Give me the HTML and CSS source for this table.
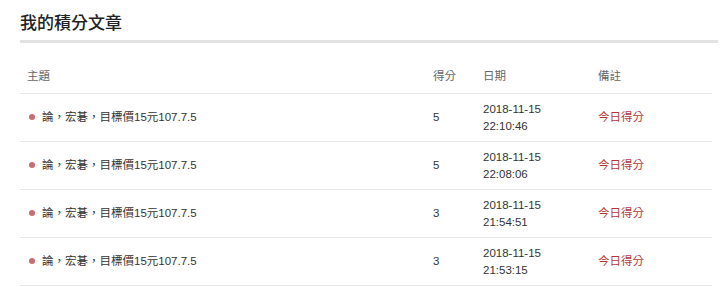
FILE: index.html
```html
<!DOCTYPE html>
<html lang="zh-Hant">
<head>
<meta charset="utf-8">
<link rel="stylesheet" href="styles.css">
</head>
<body>
<div class="page">
  <h2 class="title">我的積分文章</h2>
  <table class="list">
    <thead>
      <tr>
        <th class="c-subject">主題</th>
        <th class="c-score">得分</th>
        <th class="c-date">日期</th>
        <th class="c-note">備註</th>
      </tr>
    </thead>
    <tbody>
      <tr>
        <td class="c-subject"><span class="dot"></span>論，宏碁，目標價15元107.7.5</td>
        <td class="c-score">5</td>
        <td class="c-date">2018-11-15<br>22:10:46</td>
        <td class="c-note note">今日得分</td>
      </tr>
      <tr>
        <td class="c-subject"><span class="dot"></span>論，宏碁，目標價15元107.7.5</td>
        <td class="c-score">5</td>
        <td class="c-date">2018-11-15<br>22:08:06</td>
        <td class="c-note note">今日得分</td>
      </tr>
      <tr>
        <td class="c-subject"><span class="dot"></span>論，宏碁，目標價15元107.7.5</td>
        <td class="c-score">3</td>
        <td class="c-date">2018-11-15<br>21:54:51</td>
        <td class="c-note note">今日得分</td>
      </tr>
      <tr>
        <td class="c-subject"><span class="dot"></span>論，宏碁，目標價15元107.7.5</td>
        <td class="c-score">3</td>
        <td class="c-date">2018-11-15<br>21:53:15</td>
        <td class="c-note note">今日得分</td>
      </tr>
    </tbody>
  </table>
</div>
</body>
</html>
```
FILE: styles.css
```css
html, body {
  margin: 0;
  padding: 0;
  background: #ffffff;
}
body {
  font-family: "Liberation Sans", Arial, "Noto Sans CJK TC", sans-serif;
  color: #333333;
}
.page {
  padding-left: 20px;
  padding-right: 2px;
}
.title {
  margin: 0;
  padding-top: 12px;
  padding-bottom: 4px;
  font-size: 17px;
  line-height: 24px;
  font-weight: 500;
  color: #222222;
  border-bottom: 3px solid #e2e2e2;
}
.list {
  width: 692px;
  border-collapse: collapse;
  font-size: 11.5px;
  line-height: 17px;
}
.list th {
  height: 42px;
  padding: 0 7px 8px 7px;
  vertical-align: bottom;
  text-align: left;
  font-weight: normal;
  color: #666666;
  border-bottom: 1px solid #e8e8e8;
}
.list td {
  height: 47px;
  padding: 0 7px;
  vertical-align: middle;
  text-align: left;
  color: #333333;
  border-bottom: 1px solid #e8e8e8;
}
.c-subject { width: 392px; }
.c-score { width: 36px; }
.c-date { width: 101px; }
.dot {
  display: inline-block;
  width: 6px;
  height: 6px;
  border-radius: 50%;
  background: #cd6b73;
  margin-left: 2px;
  margin-right: 7px;
  vertical-align: 1px;
}
.list td.note {
  color: #b0343c;
}
```
